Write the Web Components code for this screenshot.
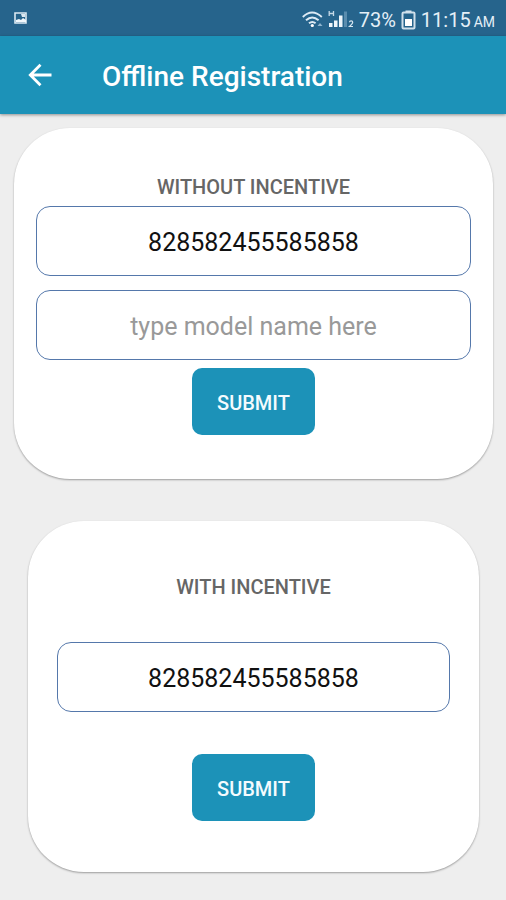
<!DOCTYPE html>
<html lang="en">
<head>
<meta charset="utf-8">
<meta name="viewport" content="width=device-width, initial-scale=1">
<title>Offline Registration</title>
<style>
body { margin: 0; background: #eeeeee; font-family: Roboto, "Liberation Sans", sans-serif; }
main { display: flex; flex-direction: column; gap: 42px; padding: 14px 13px 27px 14px; }
.narrow {
  margin: 0 14px;
  --card-padding: 55px 29px 51px;
  --label-gap: 44px;
  --action-gap: 42px;
}
</style>
</head>
<body>
<status-bar></status-bar>
<app-header>Offline Registration</app-header>
<main>
  <incentive-card>
    <span slot="title">WITHOUT INCENTIVE</span>
    <text-field label="Serial number without incentive" value="828582455585858"></text-field>
    <text-field label="Model name" placeholder="type model name here"></text-field>
    <submit-button slot="action">SUBMIT</submit-button>
  </incentive-card>
  <incentive-card class="narrow">
    <span slot="title">WITH INCENTIVE</span>
    <text-field label="Serial number with incentive" value="828582455585858"></text-field>
    <submit-button slot="action">SUBMIT</submit-button>
  </incentive-card>
</main>
<script>
class ShadowElement extends HTMLElement {
  constructor() {
    super();
    this.attachShadow({ mode: 'open' }).innerHTML = this.constructor.markup;
  }
}

customElements.define('status-bar', class extends ShadowElement {
  static markup = `
    <style>
      :host { display: flex; align-items: center; height: 36px; padding: 0 11px 0 14px; box-sizing: border-box;
        background: #26648c; color: #e4eff7; font-size: 20px; line-height: 24px; white-space: nowrap; }
      svg { display: block; flex: none; }
      .right { display: flex; align-items: center; gap: 5px; margin-left: auto; padding-top: 3px; }
      .time { display: flex; align-items: baseline; gap: 3px; }
      small { font-size: 14px; line-height: 16px; }
    </style>
    <svg width="13" height="12" viewBox="0 0 13 12" role="img" aria-label="Picture notification">
      <path d="M1 1h11v10H1z" fill="#26648c" stroke="#dbe9f2" stroke-width="1.6"/>
      <path d="M2 10V8l3-1 2 1 2-2 3 2v2z" fill="#f2f8fc"/><path d="M7 2h4v3H8z" fill="#dbe9f2"/>
    </svg>
    <span class="right">
      <svg width="21" height="17" viewBox="0 0 21 17" fill="none" stroke="#dceaf4" stroke-width="1.9" role="img" aria-label="Wi-Fi">
        <path d="M.8 6Q10-2.800 19.800 6"/><path d="M4 9.200q6.200-5.600 12.600 0"/><path d="M7 12.300q3.300-2.800 6.600 0"/>
        <circle cx="10.300" cy="14.500" r="1.600" fill="#fff" stroke="none"/>
        <path d="M15.500 15l2.500-3 2.500 3z" fill="#8fb5cf" stroke="none"/>
      </svg>
      <svg width="26" height="19" viewBox="0 0 26 19" role="img" aria-label="Mobile signal, SIM 2">
        <path d="M1.200 1v5M5.500 1v5M1.200 3.500h4.300" fill="none" stroke="#c3d8e6" stroke-width="1.300"/>
        <path d="M1 13h3.500v4H1zM6 10.500h3.500V17H6zM11 5.500h3.500V17H11z" fill="#edf5fa"/>
        <path d="M16 1.500h3V17h-3z" fill="#5a8dae"/>
        <path d="M21.500 12.300q0-1.500 1.600-1.500t1.600 1.500-3.200 4.200h3.500" fill="none" stroke="#d5e5f0" stroke-width="1.200"/>
      </svg>
      <span>73%</span>
      <svg width="15" height="20" viewBox="0 0 15 20" role="img" aria-label="Battery">
        <path d="M4.500 .5h6v2h-6z" fill="#dbe9f2"/>
        <rect x="1.500" y="2.500" width="12" height="16" rx="1" fill="#26648c" stroke="#cfe0eb" stroke-width="2"/>
        <path d="M4 9h7v7H4z" fill="#fff"/>
      </svg>
      <span class="time"><span>11:15</span><small>AM</small></span>
    </span>`;
});

customElements.define('app-header', class extends ShadowElement {
  static markup = `
    <style>
      :host { display: flex; align-items: center; height: 78px; padding: 0 24px; gap: 46px; box-sizing: border-box;
        background: #1c92b8; color: #fff; box-shadow: 0 1px 3px rgba(0,0,0,.4); }
      button { display: block; padding: 0; border: 0; background: none; color: inherit; }
      svg { display: block; }
      h1 { margin: 0; padding-top: 3px; font-size: 28px; line-height: 34px; font-weight: 500; white-space: nowrap; }
    </style>
    <button type="button" aria-label="Back">
      <svg width="32" height="32" viewBox="0 0 32 32" fill="none" stroke="currentColor" stroke-width="2.800">
        <path d="M27.500 16H6.500M16.500 5.800L6.300 16l10.200 10.200"/>
      </svg>
    </button>
    <h1><slot></slot></h1>`;
});

customElements.define('incentive-card', class extends ShadowElement {
  static markup = `
    <style>
      :host { display: block; background: #fff; border-radius: 56px; box-shadow: 0 1px 2px rgba(0,0,0,.35); }
      form { display: flex; flex-direction: column; padding: var(--card-padding, 48px 22px 44px); }
      h2 { margin: 0; color: #666; font-size: 20px; line-height: 22px; font-weight: 500; text-align: center; }
      .fields { display: flex; flex-direction: column; gap: 14px; margin: var(--label-gap, 8px) 0 var(--action-gap, 8px); }
      .action { display: flex; justify-content: center; }
    </style>
    <form>
      <h2><slot name="title"></slot></h2>
      <div class="fields"><slot></slot></div>
      <div class="action"><slot name="action"></slot></div>
    </form>`;
});

customElements.define('text-field', class extends ShadowElement {
  static markup = `
    <style>
      :host { display: block; }
      input { display: block; width: 100%; height: 70px; box-sizing: border-box; margin: 0; padding: 2px 16px 0;
        border: 1px solid #5578ab; border-radius: 14px; background: #fff; color: #111;
        font: 400 25px/30px Roboto, "Liberation Sans", sans-serif; text-align: center; }
      input::placeholder { color: #999; opacity: 1; }
    </style>
    <input type="text">`;
  connectedCallback() {
    const input = this.shadowRoot.querySelector('input');
    input.setAttribute('aria-label', this.getAttribute('label'));
    input.placeholder = this.getAttribute('placeholder') || '';
    input.value = this.getAttribute('value') || '';
  }
});

customElements.define('submit-button', class extends ShadowElement {
  static markup = `
    <style>
      :host { display: block; }
      button { display: block; height: 67px; padding: 2px 25px 0; border: 0; border-radius: 10px;
        background: #1c92b8; color: #f4fbfe; font: 500 20px/24px Roboto, "Liberation Sans", sans-serif; }
    </style>
    <button type="button"><slot></slot></button>`;
});
</script>
</body>
</html>
